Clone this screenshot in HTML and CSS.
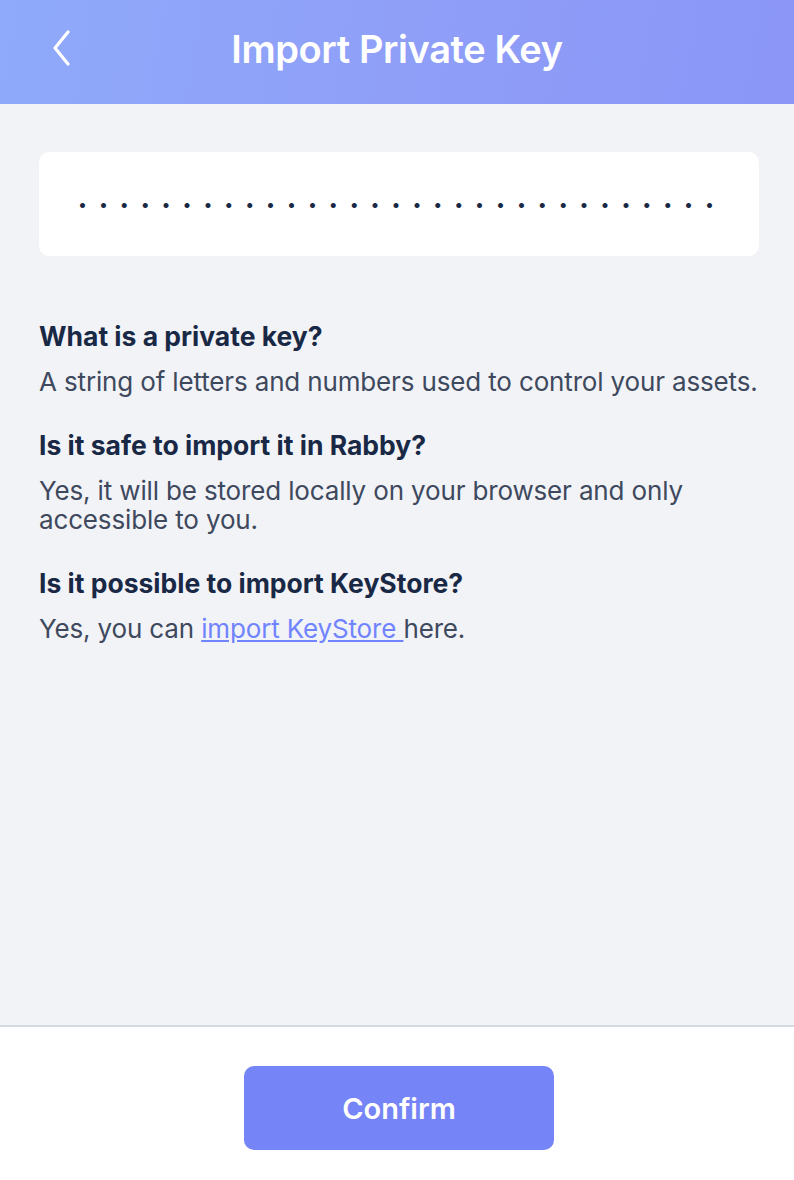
FILE: index.html
```html
<!DOCTYPE html>
<html lang="en">
<head>
  <meta charset="UTF-8">
  <title>Import Private Key</title>
  <meta name="viewport" content="width=device-width, initial-scale=1.0">
  <link rel="stylesheet" href="styles.css">
</head>
<body>
  <header class="top-bar">
    <a class="back" href="#" aria-label="Back">
      <svg width="22" height="36" viewBox="0 0 22 36" fill="none">
        <path d="M18 2 L5 18 L18 34" stroke="#fff" stroke-width="3.2" stroke-linecap="round" stroke-linejoin="round"/>
      </svg>
    </a>
    <h1>Import Private Key</h1>
  </header>

  <main class="content">
    <div class="key-box">
      <span class="dots">•••••••••••••••••••••••••••••••</span>
    </div>

    <section class="faq">
      <h3>What is a private key?</h3>
      <p>A string of letters and numbers used to control your assets.</p>
      <h3>Is it safe to import it in Rabby?</h3>
      <p>Yes, it will be stored locally on your browser and only accessible to you.</p>
      <h3>Is it possible to import KeyStore?</h3>
      <p>Yes, you can <a href="#">import KeyStore </a>here.</p>
    </section>
  </main>

  <footer class="bottom-bar">
    <button type="button" class="confirm">Confirm</button>
  </footer>
</body>
</html>
```

FILE: styles.css
```css
html, body {
  height: 100%;
}
body {
  margin: 0;
  font-family: Inter, "Noto Sans", Arial, sans-serif;
  background: #f2f3f7;
  color: #192945;
  display: flex;
  flex-direction: column;
}
.top-bar {
  height: 104px;
  flex: none;
  display: flex;
  align-items: center;
  justify-content: center;
  position: relative;
  background: linear-gradient(100deg, #8faafa 0%, #8f9ff8 50%, #8b96f7 100%);
}
.top-bar h1 {
  margin: 0 0 6px;
  color: #fff;
  font-size: 38px;
  font-weight: 600;
  letter-spacing: -0.4px;
}
.back {
  position: absolute;
  left: 50px;
  top: 30px;
  display: block;
  line-height: 0;
}
.content {
  flex: 1;
  padding: 48px 35px 0 39px;
}
.key-box {
  background: #fff;
  border-radius: 10px;
  height: 104px;
  display: flex;
  align-items: center;
  padding: 0 0 0 39px;
}
.dots {
  font-size: 16px;
  letter-spacing: 11.9px;
  color: #192945;
}
.faq {
  padding-top: 65px;
  margin-right: -6px;
}
.faq h3 {
  margin: 0 0 16px;
  font-size: 26.5px;
  font-weight: 700;
  line-height: 30px;
}
.faq p {
  margin: 0 0 34px;
  font-size: 26px;
  line-height: 29px;
  color: #3e495e;
  letter-spacing: -0.15px;
}
.faq a {
  color: #7084ff;
  text-decoration: underline;
}
.bottom-bar {
  flex: none;
  height: 155px;
  background: #fff;
  border-top: 2px solid #d6dbe3;
  display: flex;
  justify-content: center;
  padding: 39px 0 0 4px;
  box-sizing: border-box;
}
.confirm {
  width: 310px;
  height: 84px;
  border: none;
  border-radius: 10px;
  background: #7584f7;
  color: #fff;
  font-family: inherit;
  font-size: 29px;
  font-weight: 600;
  cursor: pointer;
}
```
